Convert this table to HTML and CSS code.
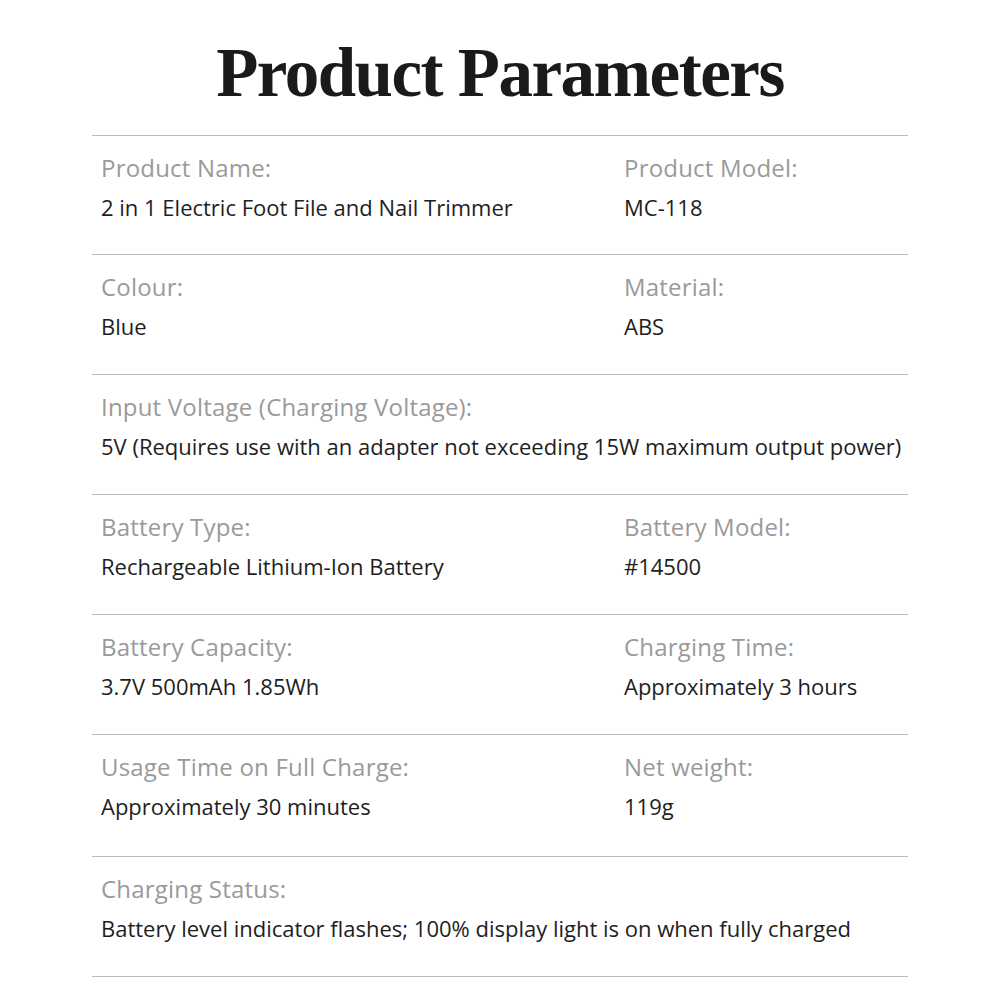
FILE: index.html
```html
<!DOCTYPE html>
<html>
<head>
<meta charset="utf-8">
<link rel="stylesheet" href="styles.css">
</head>
<body>
<div class="page">
  <h1 class="title">Product Parameters</h1>
  <div class="table">
    <div class="row">
      <div class="cell"><div class="label">Product Name:</div><div class="value">2 in 1 Electric Foot File and Nail Trimmer</div></div>
      <div class="cell"><div class="label">Product Model:</div><div class="value">MC-118</div></div>
    </div>
    <div class="row">
      <div class="cell"><div class="label">Colour:</div><div class="value">Blue</div></div>
      <div class="cell"><div class="label">Material:</div><div class="value">ABS</div></div>
    </div>
    <div class="row single">
      <div class="cell"><div class="label">Input Voltage (Charging Voltage):</div><div class="value">5V (Requires use with an adapter not exceeding 15W maximum output power)</div></div>
    </div>
    <div class="row">
      <div class="cell"><div class="label">Battery Type:</div><div class="value">Rechargeable Lithium-Ion Battery</div></div>
      <div class="cell"><div class="label">Battery Model:</div><div class="value">#14500</div></div>
    </div>
    <div class="row">
      <div class="cell"><div class="label">Battery Capacity:</div><div class="value">3.7V 500mAh 1.85Wh</div></div>
      <div class="cell"><div class="label">Charging Time:</div><div class="value">Approximately 3 hours</div></div>
    </div>
    <div class="row tall">
      <div class="cell"><div class="label">Usage Time on Full Charge:</div><div class="value">Approximately 30 minutes</div></div>
      <div class="cell"><div class="label">Net weight:</div><div class="value">119g</div></div>
    </div>
    <div class="row single">
      <div class="cell"><div class="label">Charging Status:</div><div class="value">Battery level indicator flashes; 100% display light is on when fully charged</div></div>
    </div>
  </div>
</div>
</body>
</html>
```
FILE: styles.css
```css
html, body { margin: 0; padding: 0; background: #fff; }
.page { width: 1000px; height: 1000px; }
.title {
  margin: 0;
  padding-top: 33px;
  height: 135px;
  box-sizing: border-box;
  text-align: center;
  font-family: "Liberation Serif", serif;
  font-weight: bold;
  font-size: 69px;
  letter-spacing: -1.5px;
  line-height: 80px;
  color: #1a1a1a;
}
.table {
  width: 816px;
  margin: 0 auto;
  border-top: 1px solid #bdbdbd;
}
.row {
  display: grid;
  grid-template-columns: 523px 1fr;
  height: 119px;
  border-bottom: 1px solid #bdbdbd;
  padding-left: 9px;
}
.row:first-child { height: 118px; }
.row.tall { height: 121px; }
.row.single { grid-template-columns: 1fr; }
.cell { padding-top: 18px; }
.label {
  font-family: "Open Sans", sans-serif;
  font-size: 24px;
  letter-spacing: 0.2px;
  line-height: 28px;
  color: #9a9a9a;
}
.value {
  margin-top: 11px;
  font-family: "Open Sans", sans-serif;
  font-size: 22px;
  line-height: 28px;
  color: #1e1e1e;
}
```
